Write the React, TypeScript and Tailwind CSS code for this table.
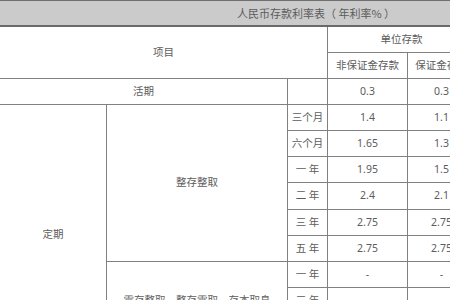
const cell = "flex items-center justify-center border-r border-b border-[#808080] whitespace-nowrap";

type Row = { term: string; a: string; b: string; c: string };

const fixedRows: Row[] = [
  { term: "三个月", a: "1.4", b: "1.1", c: "1.1" },
  { term: "六个月", a: "1.65", b: "1.3", c: "1.3" },
  { term: "一 年", a: "1.95", b: "1.5", c: "1.5" },
  { term: "二 年", a: "2.4", b: "2.1", c: "2.1" },
  { term: "三 年", a: "2.75", b: "2.75", c: "2.75" },
  { term: "五 年", a: "2.75", b: "2.75", c: "2.75" },
];

const savingRows: Row[] = [
  { term: "一 年", a: "-", b: "-", c: "1.35" },
  { term: "三 年", a: "-", b: "-", c: "1.55" },
  { term: "五 年", a: "-", b: "-", c: "1.55" },
];

export default function App() {
  return (
    <div className="w-[450px] h-[300px] overflow-hidden bg-white">
      <div
        className="grid w-[614px] grid-cols-[107px_181px_40px_80px_68px_138px] grid-rows-[26px_26px_26px_26px_26px_26px_26px_27px_26px_26px_26px_26px_26px_26px] border-t border-[#707070] text-[10.5px] text-[#5c5c5c]"
        style={{ fontFamily: '"Noto Sans", "Noto Sans CJK SC", sans-serif' }}
      >
        {/* title */}
        <div
          className="col-span-6 flex items-center border-b-2 border-[#6a6a6a] bg-[#cbcbcb] pl-[237px] text-[11px] whitespace-pre"
          style={{ fontFamily: '"Noto Sans CJK SC", sans-serif' }}
        >
          人民币存款利率表（ 年利率% ）
        </div>

        {/* head */}
        <div className={`${cell} col-span-3 row-span-2`}>项目</div>
        <div className={`${cell} col-span-2`}>单位存款</div>
        <div className={`${cell} row-span-2`}>个人存款</div>
        <div className={cell}>非保证金存款</div>
        <div className={cell}>保证金存款</div>

        {/* 活期 */}
        <div className={`${cell} col-span-2`}>活期</div>
        <div className={cell}></div>
        <div className={cell}>0.3</div>
        <div className={cell}>0.3</div>
        <div className={cell}>0.35</div>

        {/* 定期 */}
        <div className={`${cell} row-span-10`}>定期</div>
        {fixedRows.map((r, i) => (
          <FixedRow key={r.term + i} row={r} first={i === 0} label="整存整取" span="row-span-6" />
        ))}
        {savingRows.map((r, i) => (
          <FixedRow key={r.term + i} row={r} first={i === 0} label="零存整取、整存零取、存本取息" span="row-span-3" />
        ))}
        <div className={`${cell} col-span-2`}>定活两便</div>
        <div className={cell}>-</div>
        <div className={cell}>-</div>
        <div className={cell}>-</div>
      </div>
    </div>
  );
}

function FixedRow({ row, first, label, span }: { row: Row; first: boolean; label: string; span: string }) {
  return (
    <>
      {first && <div className={`${cell} ${span}`}>{label}</div>}
      <div className={cell}>{row.term}</div>
      <div className={cell}>{row.a}</div>
      <div className={cell}>{row.b}</div>
      <div className={cell}>{row.c}</div>
    </>
  );
}
